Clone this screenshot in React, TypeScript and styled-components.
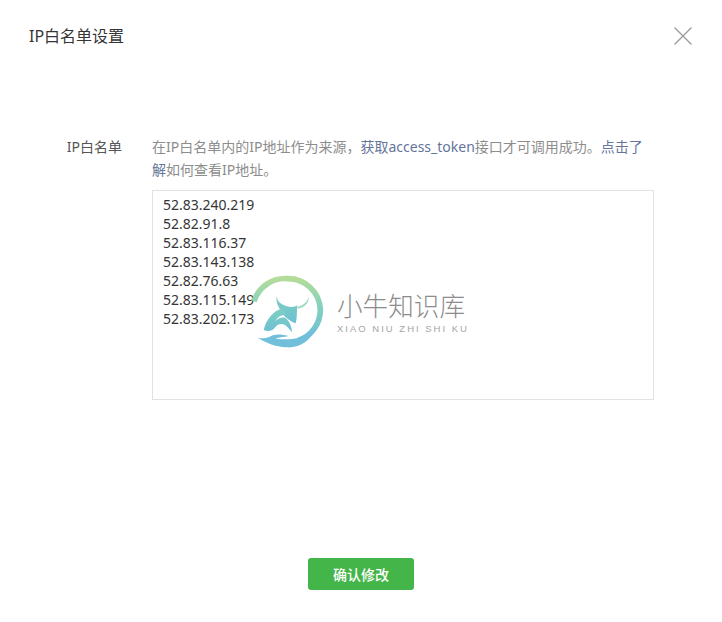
import styled, { createGlobalStyle } from 'styled-components'

const ips = [
  '52.83.240.219',
  '52.82.91.8',
  '52.83.116.37',
  '52.83.143.138',
  '52.82.76.63',
  '52.83.115.149',
  '52.83.202.173',
]

const App = () => {
  return (
    <>
      <GlobalStyle />
      <Dialog>
        <Header>
          <Title>IP白名单设置</Title>
          <CloseButton aria-label='close'>
            <svg width='20' height='20' viewBox='0 0 20 20' fill='none' stroke='#9a9a9a' strokeWidth='1.3'>
              <path d='M1.5 1.5 L18.5 18.5 M18.5 1.5 L1.5 18.5' />
            </svg>
          </CloseButton>
        </Header>

        <FormRow>
          <Label>IP白名单</Label>
          <Field>
            <Hint>
              在IP白名单内的IP地址作为来源，<HintLink>获取access_token</HintLink>接口才可调用成功。<HintLink>点击了解</HintLink>如何查看IP地址。
            </Hint>
            <IpList readOnly defaultValue={ips.join('\n')} />
          </Field>
        </FormRow>

        <Footer>
          <ConfirmButton>确认修改</ConfirmButton>
        </Footer>

        <Watermark>
          <svg width='90' height='90' viewBox='0 0 270 270'>
            <defs>
              <linearGradient id='ring' x1='0' y1='0' x2='0' y2='1'>
                <stop offset='0' stopColor='#b4dc9a' />
                <stop offset='0.5' stopColor='#7fd0c0' />
                <stop offset='1' stopColor='#6fbcdc' />
              </linearGradient>
              <linearGradient id='bull' x1='0' y1='0' x2='0' y2='1'>
                <stop offset='0' stopColor='#7fd0c0' />
                <stop offset='1' stopColor='#6cbfd4' />
              </linearGradient>
            </defs>
            <path
              d='M27 100 A97 97 0 0 1 128 32 A97 97 0 0 1 226 125 A97 97 0 0 1 160 217'
              fill='none'
              stroke='url(#ring)'
              strokeWidth='17'
            />
            <path
              d='M38 209 C60 214 72 208 84 202 C100 198 112 200 130 204 C116 208 100 208 92 212 C130 216 180 216 212 180 C196 222 160 240 125 238 C90 236 62 224 38 209 Z'
              fill='#72bfdc'
            />
            {/* head and horn */}
            <path
              d='M95 85 C97 100 108 110 124 114 C136 118 148 118 158 112 C154 124 158 146 152 166 C136 160 118 148 108 130 C100 116 92 102 95 85 Z'
              fill='url(#bull)'
            />
            {/* body with the swoosh cut out of it */}
            <path
              d='M110 122 C86 128 64 152 56 186 C70 192 84 188 92 176 C100 166 114 166 124 174 C130 180 136 186 141 193 C141 176 133 160 122 150 C110 146 98 152 90 160 C96 148 108 140 126 140 Z'
              fill='url(#bull)'
            />
            {/* thin horn */}
            <path d='M158 116 C174 112 188 102 190 86 C194 100 184 116 160 122 Z' fill='#9fd8c0' />
          </svg>
          <Brand>
            <BrandName>小牛知识库</BrandName>
            <BrandPinyin>XIAO NIU ZHI SHI KU</BrandPinyin>
          </Brand>
        </Watermark>
      </Dialog>
    </>
  )
}

const GlobalStyle = createGlobalStyle`
  body {
    margin: 0;
    background-color: #fff;
    font-family: "Noto Sans", "Noto Sans CJK SC", sans-serif;
  }
`

const Dialog = styled.div`
  position: relative;
  width: 722px;
  height: 622px;
  overflow: hidden;
  background-color: #fff;
`

const Header = styled.div`
  display: flex;
  align-items: center;
  justify-content: space-between;
  padding: 26px 29px 0 29px;
  height: 20px;
`

const Title = styled.h1`
  margin: 0;
  font-size: 16px;
  font-weight: 400;
  line-height: 20px;
  color: #353535;
`

const CloseButton = styled.div`
  display: flex;
`

const FormRow = styled.div`
  display: flex;
  margin-top: 89px;
`

const Label = styled.div`
  width: 122px;
  flex-shrink: 0;
  text-align: right;
  font-size: 14px;
  line-height: 23px;
  color: #555;
`

const Field = styled.div`
  margin-left: 30px;
  width: 502px;
`

const Hint = styled.p`
  margin: 0 0 9px 0;
  font-size: 14px;
  line-height: 23px;
  color: #8d8d8d;
`

const HintLink = styled.span`
  color: #66759a;
`

const IpList = styled.textarea`
  display: block;
  box-sizing: border-box;
  width: 502px;
  height: 210px;
  padding: 4px 10px;
  border: 1px solid #e2e2e2;
  outline: none;
  resize: none;
  font-family: "Noto Sans", "Noto Sans CJK SC", sans-serif;
  font-size: 14px;
  line-height: 19px;
  color: #353535;
  background: #fff;
`

const Footer = styled.div`
  display: flex;
  justify-content: center;
  margin-top: 158px;
`

const ConfirmButton = styled.button`
  width: 106px;
  height: 32px;
  padding: 0;
  border: none;
  border-radius: 3px;
  background-color: #44b549;
  color: #fff;
  font-family: "Noto Sans CJK SC", sans-serif;
  font-size: 14px;
  font-weight: 500;
`

const Watermark = styled.div`
  position: absolute;
  left: 245px;
  top: 268px;
  display: flex;
  align-items: flex-start;
  pointer-events: none;
`

const Brand = styled.div`
  display: flex;
  flex-direction: column;
  margin: 21px 0 0 2px;
`

const BrandName = styled.div`
  font-family: "Noto Sans CJK SC", sans-serif;
  font-size: 25.6px;
  font-weight: 300;
  line-height: 32px;
  color: #8c8c8c;
`

const BrandPinyin = styled.div`
  margin-top: 2px;
  font-family: "Liberation Sans", sans-serif;
  font-size: 9.5px;
  line-height: 12px;
  letter-spacing: 2px;
  white-space: nowrap;
  color: #a5a5a5;
`

export default App
